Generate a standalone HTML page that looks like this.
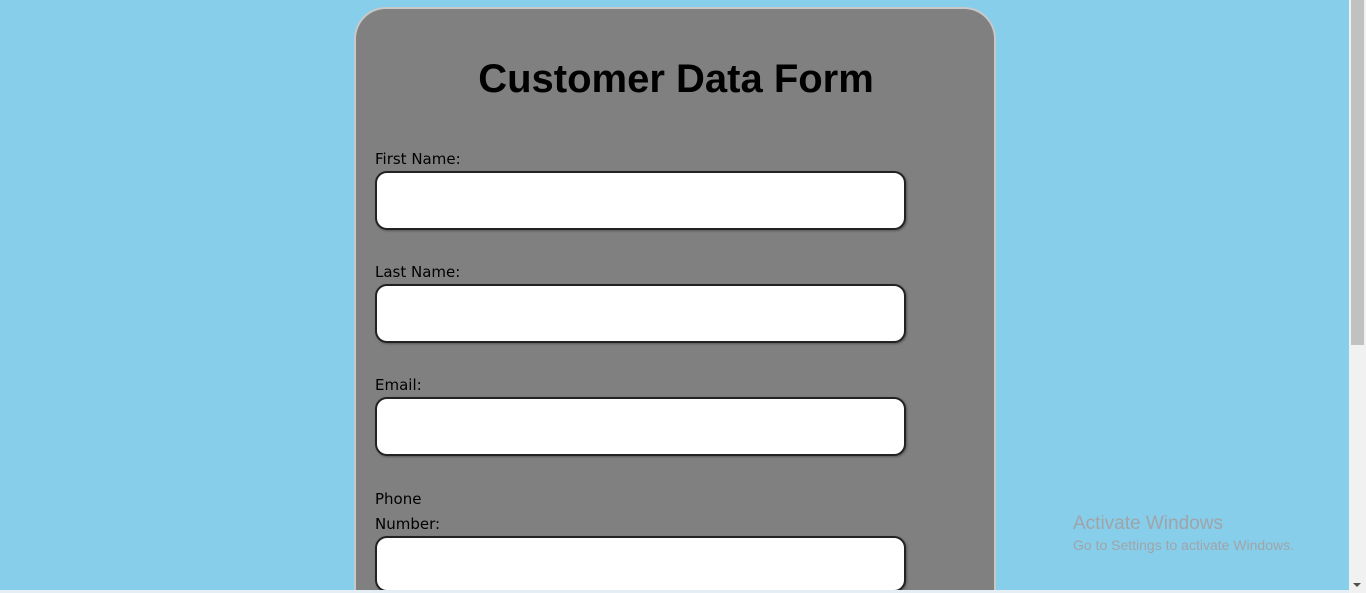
<!DOCTYPE html>
<html style="overflow:hidden;height:593px"><head><style>
html,body{margin:0;padding:0;}
body{width:1366px;height:593px;background:#87ceeb;position:relative;overflow:hidden;font-family:"DejaVu Sans","Liberation Sans",sans-serif;}
.card{position:absolute;left:354px;top:7px;width:638px;height:584px;background:#808080;border:2px solid #c8c8c8;border-bottom:0;border-radius:32px 32px 0 0;}
h1{position:absolute;left:0;width:640px;top:48px;margin:0;text-align:center;font:bold 40px "Liberation Sans",sans-serif;color:#000;}
.lab{position:absolute;left:19px;font-size:15px;color:#000;line-height:25px;}
.inp{position:absolute;left:19px;width:527px;height:55px;background:#fff;border:2px solid #222;border-radius:12px;box-shadow:1px 1px 2px #555;}
.sb{position:absolute;right:0;top:0;width:17px;height:593px;background:#f1f1f1;}
.th{position:absolute;right:2px;top:0;width:13px;height:345px;background:#c1c1c1;}
.aw{position:absolute;left:1073px;top:513px;color:#a0a4a8;font-family:"Liberation Sans",sans-serif;}
.bot{position:absolute;left:0;top:590px;width:1349px;height:3px;background:#e6eef5;}
</style></head><body>
<div class="card">
<h1>Customer Data Form</h1>
<div class="lab" style="top:138px">First Name:</div>
<div class="inp" style="top:162px"></div>
<div class="lab" style="top:251px">Last Name:</div>
<div class="inp" style="top:275px"></div>
<div class="lab" style="top:364px">Email:</div>
<div class="inp" style="top:388px"></div>
<div class="lab" style="top:478px;width:70px">Phone<br>Number:</div>
<div class="inp" style="top:527px;height:52px"></div>
</div>
<div class="aw"><div style="font-size:19px">Activate Windows</div><div style="font-size:14px;margin-top:2px">Go to Settings to activate Windows.</div></div>
<div class="bot"></div>
<div class="sb"><div class="th"></div><div style="position:absolute;bottom:6px;left:4px;width:0;height:0;border-left:4px solid transparent;border-right:4px solid transparent;border-top:4px solid #505050"></div></div>
</body></html>
